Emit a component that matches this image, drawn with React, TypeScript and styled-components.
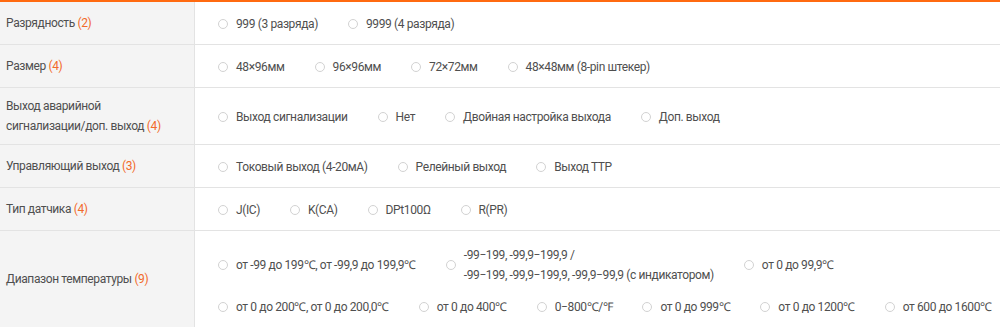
import React from "react";
import styled, { createGlobalStyle } from "styled-components";

const GlobalStyle = createGlobalStyle`
  html, body {
    margin: 0;
    padding: 0;
    background: #fff;
  }
  body {
    font-family: Roboto, "Liberation Sans", Arial, sans-serif;
    font-size: 12px;
    letter-spacing: -0.38px;
    color: #4f4f4f;
  }
`;

type Row = {
  label: React.ReactNode;
  count: number;
  lines: string[][];
  tall?: boolean;
};

const rows: Row[] = [
  { label: "Разрядность", count: 2, lines: [["999 (3 разряда)", "9999 (4 разряда)"]] },
  {
    label: "Размер",
    count: 4,
    lines: [["48×96мм", "96×96мм", "72×72мм", "48×48мм (8-pin штекер)"]],
  },
  {
    label: (
      <>
        Выход аварийной
        <br />
        сигнализации/доп. выход
      </>
    ),
    count: 4,
    lines: [["Выход сигнализации", "Нет", "Двойная настройка выхода", "Доп. выход"]],
  },
  {
    label: "Управляющий выход",
    count: 3,
    lines: [["Токовый выход (4-20мА)", "Релейный выход", "Выход ТТР"]],
  },
  { label: "Тип датчика", count: 4, lines: [["J(IC)", "K(CA)", "DPt100Ω", "R(PR)"]] },
  {
    label: "Диапазон температуры",
    count: 9,
    tall: true,
    lines: [
      [
        "от -99 до 199℃, от -99,9 до 199,9℃",
        "-99−199, -99,9−199,9 /\n-99−199, -99,9−199,9, -99,9−99,9 (с индикатором)",
        "от 0 до 99,9℃",
      ],
      [
        "от 0 до 200℃, от 0 до 200,0℃",
        "от 0 до 400℃",
        "0−800℃/℉",
        "от 0 до 999℃",
        "от 0 до 1200℃",
        "от 600 до 1600℃",
      ],
    ],
  },
];

const Table = styled.div`
  border-top: 2px solid #ff6a10;
  width: 1000px;
`;

const TableRow = styled.div`
  display: grid;
  grid-template-columns: 195px 1fr;
  border-bottom: 1px solid #e3e3e3;
`;

const Label = styled.div`
  background: #f4f4f4;
  border-right: 1px solid #e3e3e3;
  padding: 8px 6px;
  line-height: 20px;
  display: flex;
  align-items: center;
`;

const Count = styled.span`
  color: #f26a2a;
`;

const Values = styled.div<{ $tall?: boolean }>`
  padding: ${(p) => (p.$tall ? "14px 0 10px 23px" : "12px 0 10px 23px")};
  display: flex;
  flex-direction: column;
  justify-content: center;
  row-gap: 12px;
  min-width: 0;
`;

const Line = styled.div`
  display: flex;
  align-items: center;
  column-gap: 30px;
  white-space: nowrap;
`;

const Option = styled.label`
  display: flex;
  align-items: center;
  gap: 8px;
  line-height: 20px;
`;

const Radio = styled.span`
  flex: none;
  width: 10px;
  height: 10px;
  border: 1px solid #d2d2d2;
  border-radius: 50%;
  background: #fff;
  box-sizing: border-box;
`;

const OptionText = styled.span`
  white-space: pre;
`;

export default function App() {
  return (
    <>
      <GlobalStyle />
      <Table>
        {rows.map((row, i) => (
          <TableRow key={i}>
            <Label>
              <span>
                {row.label} <Count>({row.count})</Count>
              </span>
            </Label>
            <Values $tall={row.tall}>
              {row.lines.map((line, j) => (
                <Line key={j}>
                  {line.map((opt) => (
                    <Option key={opt}>
                      <Radio />
                      <OptionText>{opt}</OptionText>
                    </Option>
                  ))}
                </Line>
              ))}
            </Values>
          </TableRow>
        ))}
      </Table>
    </>
  );
}
